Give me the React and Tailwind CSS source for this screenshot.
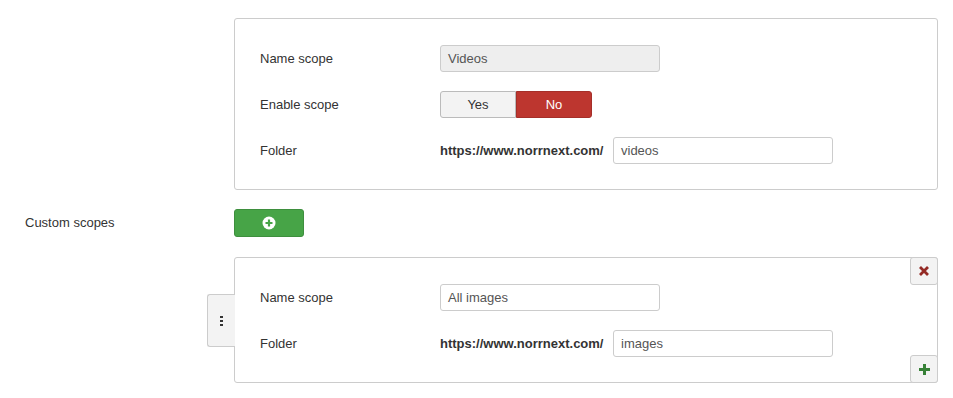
const font = { fontFamily: '"Liberation Sans", Arial, sans-serif' }

function Row({ label, children }) {
  return (
    <div className="flex items-center h-[27px]">
      <div className="w-[180px] shrink-0 text-[13px] text-[#333]">{label}</div>
      <div className="flex items-center">{children}</div>
    </div>
  )
}

function TextInput({ value, disabled }) {
  return (
    <div
      className={`w-[220px] h-[27px] flex items-center px-[7px] text-[13px] rounded-[3px] border border-[#ccc] ${
        disabled ? 'bg-[#eee] text-[#555]' : 'bg-white text-[#555]'
      }`}
    >
      {value}
    </div>
  )
}

function FolderInput({ value }) {
  return (
    <div className="flex items-center">
      <span className="w-[173px] text-[13px] font-bold text-[#333]">https://www.norrnext.com/</span>
      <TextInput value={value} />
    </div>
  )
}

export default function App() {
  return (
    <div className="bg-white w-[953px] h-[398px] overflow-hidden pt-[18px] pl-[25px]" style={font}>
      <div className="flex">
        <div className="w-[209px] shrink-0" />
        <div className="w-[704px] border border-[#ccc] rounded-[3px] pt-[26px] pb-[25px] pl-[25px] flex flex-col gap-[19px]">
          <Row label="Name scope">
            <TextInput value="Videos" disabled />
          </Row>
          <Row label="Enable scope">
            <div className="flex h-[27px] text-[13px]">
              <div className="w-[76px] flex items-center justify-center bg-[#f3f3f3] border border-[#bbb] rounded-l-[3px] text-[#333]">
                Yes
              </div>
              <div className="w-[76px] flex items-center justify-center bg-[#bd362f] border border-[#a52f29] rounded-r-[3px] text-white">
                No
              </div>
            </div>
          </Row>
          <Row label="Folder">
            <FolderInput value="videos" />
          </Row>
        </div>
      </div>

      <div className="flex items-center mt-[19px]">
        <div className="w-[209px] shrink-0 text-[13px] text-[#333]">Custom scopes</div>
        <div className="w-[70px] h-[28px] flex items-center justify-center rounded-[3px] bg-[#47a447] border border-[#3e8f3e]">
          <svg width="14" height="14" viewBox="0 0 14 14">
            <circle cx="7" cy="7" r="6.5" fill="white" />
            <path d="M7 3.5v7M3.5 7h7" stroke="#47a447" strokeWidth="2.2" />
          </svg>
        </div>
      </div>

      <div className="flex mt-[20px]">
        <div className="w-[209px] shrink-0" />
        <div className="relative w-[704px] border border-[#ccc] rounded-[3px] pt-[26px] pb-[25px] pl-[25px] flex flex-col gap-[19px]">
          <div className="absolute left-[-28px] top-[36px] w-[28px] h-[53px] bg-[#f3f3f3] border border-r-0 border-[#ccc] rounded-l-[3px] flex items-center justify-center">
            <div className="flex flex-col gap-[2px]">
              <span className="w-[3px] h-[2px] bg-[#333]" />
              <span className="w-[3px] h-[2px] bg-[#333]" />
              <span className="w-[3px] h-[2px] bg-[#333]" />
            </div>
          </div>
          <div className="absolute right-[-1px] top-[-1px] w-[28px] h-[28px] bg-[#f3f3f3] border border-[#ccc] rounded-[3px] flex items-center justify-center">
            <svg width="12" height="12" viewBox="0 0 12 12">
              <path d="M2 2l8 8M10 2l-8 8" stroke="#942a25" strokeWidth="2.8" />
            </svg>
          </div>
          <div className="absolute right-[-1px] bottom-[-1px] w-[28px] h-[28px] bg-[#f3f3f3] border border-[#ccc] rounded-[3px] flex items-center justify-center">
            <svg width="13" height="13" viewBox="0 0 13 13">
              <path d="M6.5 1v11M1 6.5h11" stroke="#378137" strokeWidth="3" />
            </svg>
          </div>
          <Row label="Name scope">
            <TextInput value="All images" />
          </Row>
          <Row label="Folder">
            <FolderInput value="images" />
          </Row>
        </div>
      </div>
    </div>
  )
}
